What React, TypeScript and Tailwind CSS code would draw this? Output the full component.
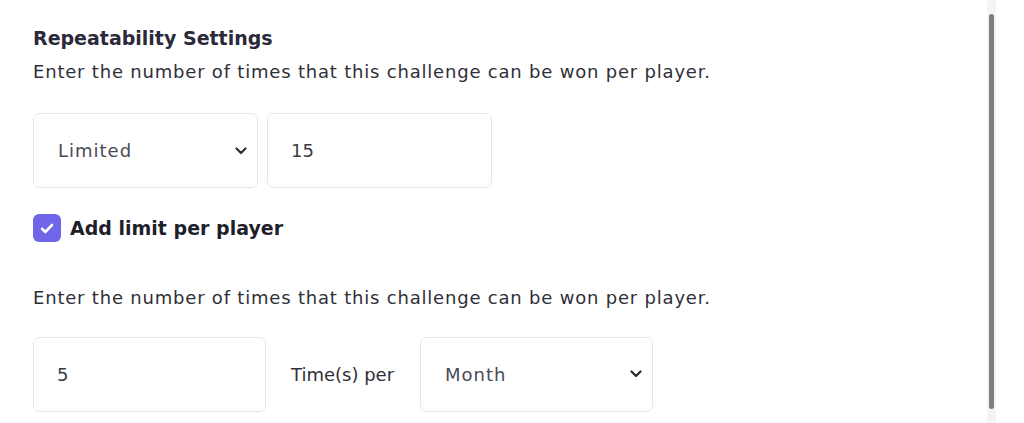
import React, { useState } from "react";

const font = { fontFamily: '"DejaVu Sans", "Liberation Sans", sans-serif' };

function Chevron() {
  return (
    <svg width="12" height="8" viewBox="0 0 12 8" fill="none">
      <path d="M1.5 1.5L6 6L10.5 1.5" stroke="#2d2d38" strokeWidth="2.2" strokeLinecap="round" strokeLinejoin="round" />
    </svg>
  );
}

function SelectBox({ value, className }: { value: string; className: string }) {
  return (
    <div className={`flex items-center justify-between h-[75px] rounded-[6px] border border-[#e9e7ee] bg-white pl-[24px] pr-[10px] ${className}`}>
      <span className="text-[18px] tracking-[1px] text-[#4a4a55]">{value}</span>
      <Chevron />
    </div>
  );
}

function InputBox({ value, className }: { value: string; className: string }) {
  return (
    <div className={`flex items-center h-[75px] rounded-[6px] border border-[#e9e7ee] bg-white pl-[23px] ${className}`}>
      <span className="text-[18px] text-[#3a3a44]">{value}</span>
    </div>
  );
}

export default function App() {
  const [checked, setChecked] = useState(true);
  return (
    <div className="flex w-[1024px] h-[423px] bg-white overflow-hidden" style={font}>
      <div className="flex-1 pl-[33px] pt-[24px]">
        <h2 className="text-[19px] font-bold text-[#2b2a3a] leading-[28px]">Repeatability Settings</h2>
        <p className="mt-[7px] text-[18px] tracking-[0.8px] text-[#2f2f38] leading-[26px]">
          Enter the number of times that this challenge can be won per player.
        </p>
        <div className="flex gap-[9px] mt-[28px]">
          <SelectBox value="Limited" className="w-[225px]" />
          <InputBox value="15" className="w-[225px]" />
        </div>
        <label className="flex items-center gap-[9px] mt-[26px] cursor-pointer" onClick={() => setChecked(!checked)}>
          <span className="flex items-center justify-center w-[28px] h-[28px] rounded-[6px] bg-[#6f66e9]">
            {checked && (
              <svg width="14" height="11" viewBox="0 0 14 11" fill="none">
                <path d="M2 5.8L5.3 9L12 2" stroke="white" strokeWidth="2.6" strokeLinecap="round" strokeLinejoin="round" />
              </svg>
            )}
          </span>
          <span className="text-[19px] font-bold text-[#1f1e2b]">Add limit per player</span>
        </label>
        <p className="mt-[42px] text-[18px] tracking-[0.8px] text-[#2f2f38] leading-[26px]">
          Enter the number of times that this challenge can be won per player.
        </p>
        <div className="flex items-center mt-[26px]">
          <InputBox value="5" className="w-[233px]" />
          <span className="ml-[25px] w-[129px] text-[18px] text-[#2f2f38]">Time(s) per</span>
          <SelectBox value="Month" className="w-[233px]" />
        </div>
      </div>
      <div className="w-[9px] mr-[28px] bg-[#f4f4f6] flex flex-col py-[14px] items-center">
        <div className="w-[5px] flex-1 rounded-full bg-[#7f7f7f]" />
      </div>
    </div>
  );
}
